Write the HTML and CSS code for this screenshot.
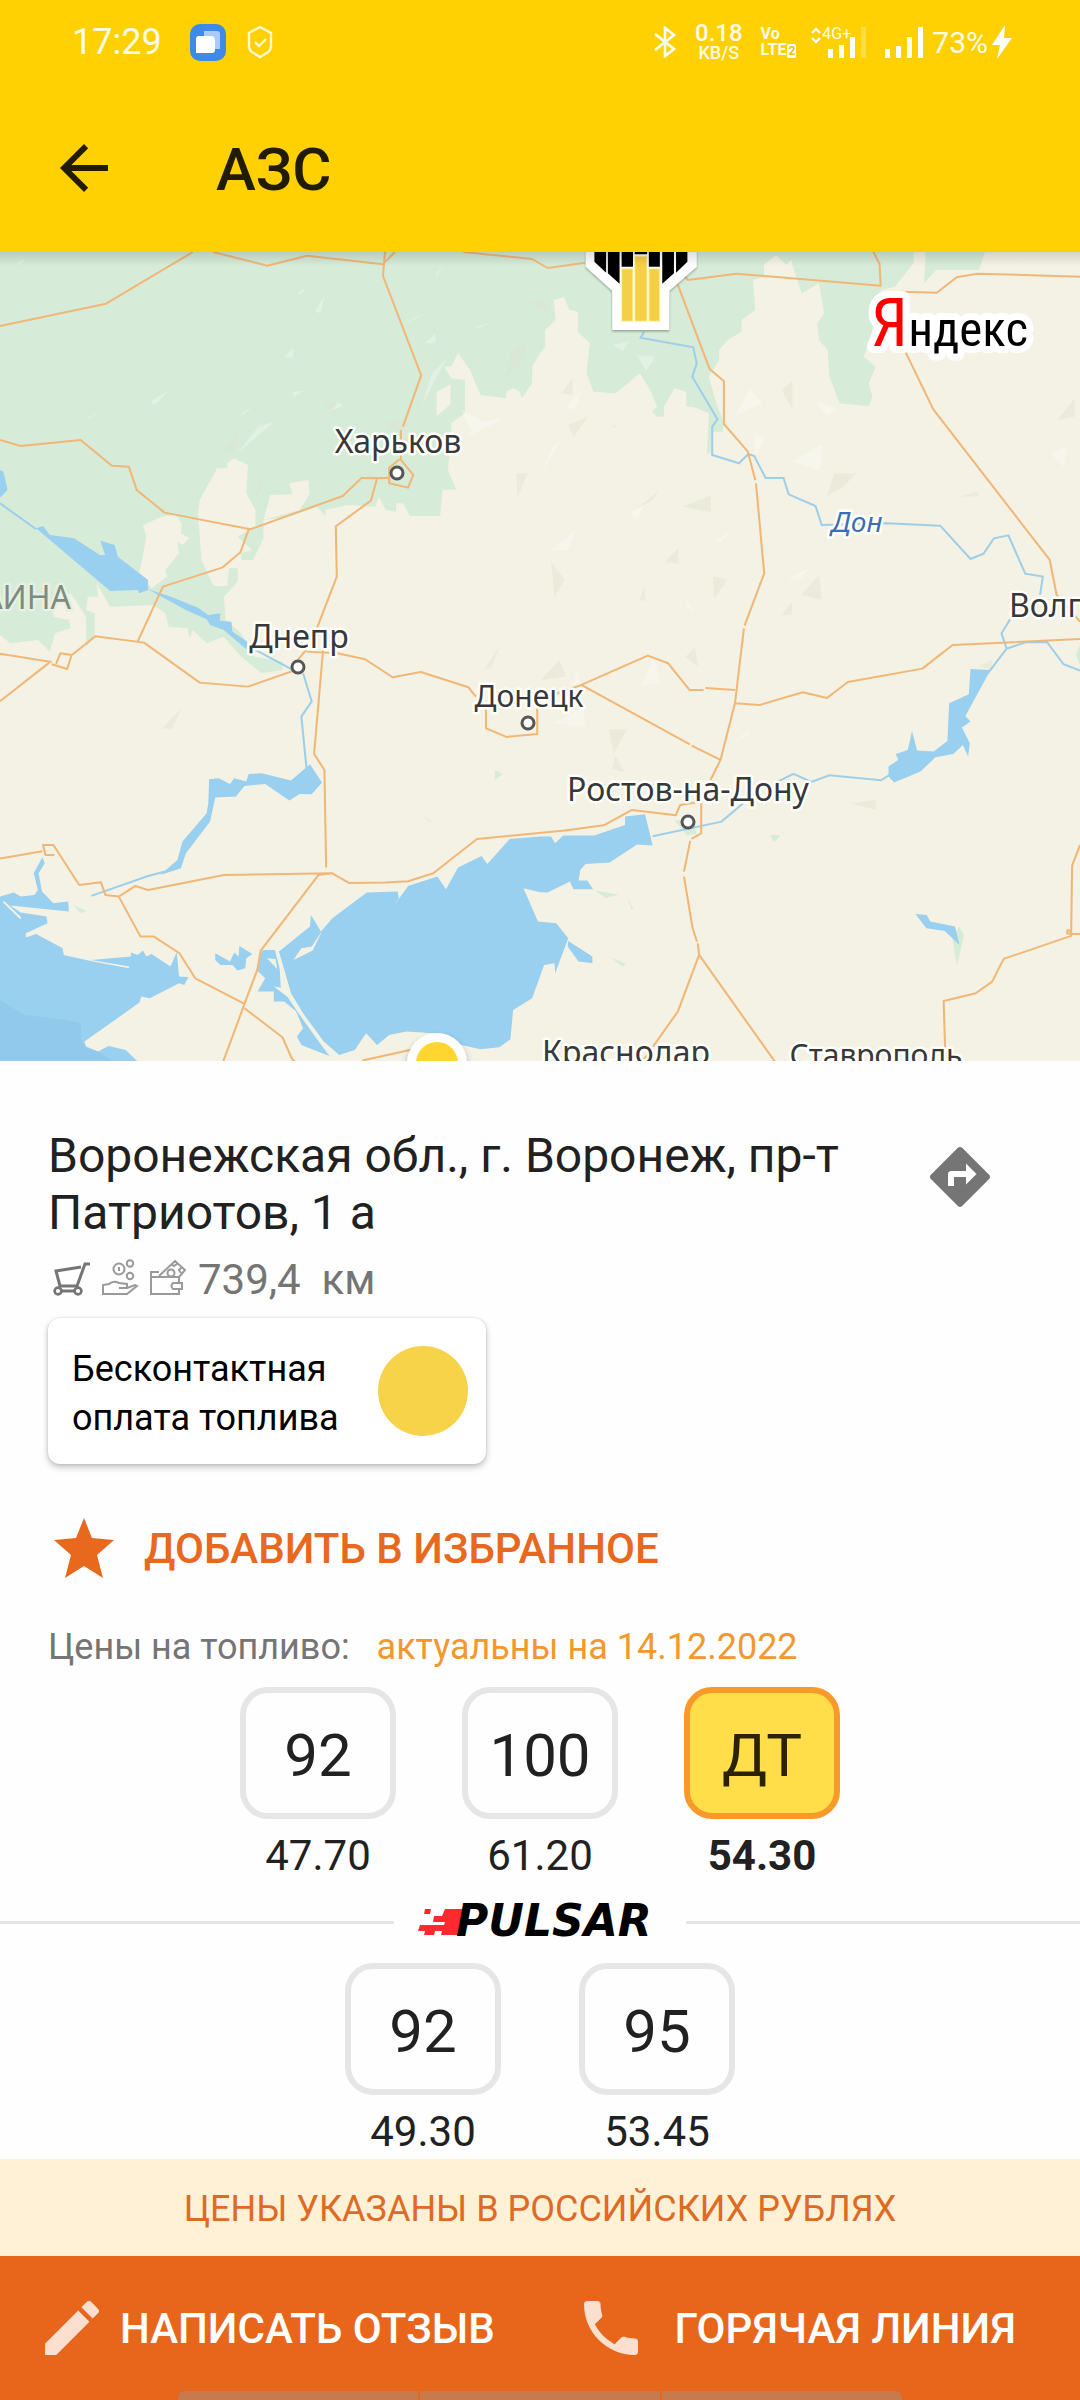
FILE: index.html
```html
<!DOCTYPE html>
<html lang="ru">
<head>
<meta charset="utf-8">
<meta name="viewport" content="width=device-width, initial-scale=1">
<title>АЗС</title>
<link rel="stylesheet" href="styles.css">
</head>
<body>
<header class="top">
  <div class="status">
    <time class="clock">17:29</time>
    <svg class="status-app" viewBox="0 0 36 37"><rect width="36" height="37" rx="10" fill="#3e8ae8"/><path d="M15 7h12q3 0 3 3v15H14V7z" fill="#abc9fb"/><path d="M9 12h12q4 0 4 4v10q0 3-3 3H6V15q0-3 3-3z" fill="#fff"/></svg>
    <svg class="status-shield" viewBox="0 0 28 34"><path d="M14 2l11 6v13q0 4-3 6l-8 5-8-5q-3-2-3-6V8z M9 17l4 4 7-7" fill="none" stroke="#fff8d0" stroke-width="2.4"/></svg>
    <span class="spacer"></span>
    <svg class="bluetooth" viewBox="0 0 24 32"><path d="M2 8l19 15-9 7V2l9 7L2 24" fill="none" stroke="#fff" stroke-width="2.6"/></svg>
    <div class="rate"><b>0.18</b><span>KB/S</span></div>
    <div class="volte"><b>Vo</b><b>LTE<i>2</i></b></div>
    <div class="cell">
      <svg viewBox="0 0 58 34"><path d="M2 8l4-4 4 4M2 13l4 4 4-4" fill="none" stroke="#fff" stroke-width="2.4"/><path d="M18 24h5v9h-5zM29 20h5v13h-5zM40 12h5v21h-5z" fill="#fff"/><path d="M51 2h5v31h-5z" fill="#fff" opacity=".25"/></svg>
      <span>4G+</span>
    </div>
    <svg class="bars" viewBox="0 0 40 34"><path d="M1 24h5v9H1zM12 21h5v12h-5zM23 12h5v21h-5zM34 2h5v31h-5z" fill="#fff"/></svg>
    <span class="battery">73%</span>
    <svg class="bolt" viewBox="0 0 20 34"><path d="M13 0L0 20h8L5 34 20 13h-8z" fill="#fff"/></svg>
  </div>
  <div class="appbar">
    <button class="back" aria-label="Назад"><svg viewBox="0 0 24 24"><path d="M20 11H7.8l5.6-5.6L12 4l-8 8 8 8 1.4-1.4L7.8 13H20z"/></svg></button>
    <h1>АЗС</h1>
  </div>
</header>

<main>
<svg class="map" viewBox="0 0 1080 809" role="img" aria-label="Карта">
  <defs>
    <filter id="soft" x="-20%" y="-20%" width="140%" height="150%"><feDropShadow dx="0" dy="4" stdDeviation="3" flood-opacity=".35"/></filter>
    <linearGradient id="shade" x1="0" y1="0" x2="0" y2="1"><stop offset="0" stop-opacity=".13"/><stop offset="1" stop-opacity="0"/></linearGradient>
  </defs>
  <rect width="1080" height="809" fill="#f4f2e4"/>
  <g transform="matrix(.3444 0 0 .3333 0 -12)">
    <!-- forests -->
    <g fill="#d6ebd8">
      <path d="M0 36H2653V70L2598 140 2558 150 2528 290 2508 350 2543 380 2523 430 2533 470 2523 498 2438 490 2408 410 2403 330 2378 300 2373 250 2393 220 2378 130 2328 160 2308 100 2298 60 2283 75 2253 45 2218 75V110L2186 120 2193 210 2153 240V275L2113 300 2088 330V360L2058 410 2083 500 2103 550 2098 575H2068L2063 640H2053L2058 520 2013 500H1993V455L1958 445 1928 500V530H1908L1893 515 1908 500 1888 450 1858 400 1788 460 1723 455 1703 400 1713 310 1678 275V215L1653 210 1638 170 1608 180 1613 240 1583 270V320L1568 340 1545 380V430L1515 475 1510 455 1490 445 1470 455V475L1395 465 1365 390 1330 340 1310 380H1290L1310 415 1350 420V520L1310 550V600L1300 690 1325 748 1285 750 1278 828H1190L1170 790H1150V815L1120 810 1100 770 1090 800 1010 795 945 810V828L920 800 840 830 765 840V895L735 960H700V940L732 930 690 890 742 860V810L715 760 720 675 680 655 660 670V685H630L615 715 580 780 575 820 585 960 620 1038H660L665 985H690V1025L650 1070 655 1140 700 1180 740 1250 820 1265V1290L760 1300 700 1250 650 1190 600 1210 560 1170 550 1195 545 1165 490 1160 480 1120 445 1095 320 1100 280 1030 285 1070H255L250 1110 275 1120V1190L250 1220V1130L205 1060 155 1075V1130L200 1140 205 1165 160 1180 145 1235 110 1200 30 1210 0 1185z"/>
      <path d="M2688 36L2683 130 2718 90H2843L2860 36zM3136 1215l-12 30 12 30z"/>
      <path d="M1437 1590l22 12-22 18zM212 1995l40 18-18 6zM1959 1742l54 0 10 40-28 4zM2236 1785h30l-18 22zM1728 1952l68 12-38 10zM1822 1974l18 36-6-2zM1772 2152l46 20-10 8zM2785 2060l14 26-20 90-6-30-8-55z"/>
    </g>
    <path fill="#f4f2e4" d="M415 855L470 830 510 825 528 850 525 880 550 895 530 915 515 905 520 940 480 990 485 1010 440 1045 405 1000 425 890zM785 765L850 763 840 730 895 720 900 760 870 810 765 840zM1268 455l40-22v60l-40 36z"/>
    <!-- relief facets -->
    <g fill="#fff" opacity=".32">
      <path d="M40 78l34-25-8 14zM585 135l5-30zM860 165l30-27-12 22zM915 215l27-50-10 55zM825 350l26-26v30zM437 485l57-38-44 48zM245 540l48-28-26 20zM690 640l60-80 46-15zM850 455l32-2-30 18zM700 520l38-26-36 34zM956 512l25-25 16 12zM1225 495l30-95 40-42zM1235 310l30-30v30zM1182 250l50-27-36 14zM1382 260l48-13-44 20zM1265 108l25-44-20 44zM1095 460l55-40zM1358 590l108-56-80 16zM1340 510l26 60 40-24zM640 845l38-36zM1490 920l34-22zM1436 1034l62-32zM1776 1135l50-28zM1570 700l40-90 15 0zM1645 500l45-50-20 60zM1778 315l50-12-20 30zM1850 345l52 5-26 44zM2130 530l50-84 34 42zM2300 665l90-52-10 80zM2190 575l32 22-28 50zM2370 485l60 20-30 22zM2720 560l36-38zM3050 640l48-20-10 60zM1600 930l70-60-20 60zM1830 820l44-30-24 50zM1985 1060l30 60-20-20zM2070 900l58-25-36 30zM2290 1015l60-30-32 40zM1610 1450l90 10-6-60zM1645 1410l30-120 15 80zM2140 1500l34-34v20zM1860 1340l40-92 14 80zM2450 1560l48-24zM2360 2060l20-12zM2710 2370l42-55zM300 2210l58-46-20 30zM635 1575l48-42zM220 1395l44-30zM1410 1300l50-80zM3050 1650l40-18z"/>
    </g>
    <g fill="#dfe0d0" opacity=".4">
      <path d="M1470 405l20-80 40-20-20 70zM940 480l40 12-14 20zM650 640l40-60-10 50zM1128 545h65l-20 28-45-3zM742 780l18-80v40zM1500 700h32l-30 76zM1540 190l34-14 20 40zM1630 460l32-46v52zM1775 560l18-8-10 12zM1650 555l60-28-44 64zM1845 810l70-60-20 30zM2270 450l30-28v84zM2400 770l22-70h66l-40 40zM1980 800l84-34v50zM1600 965l40 55-30 50zM1855 1080l16-38 4 40zM2325 1065l54-60 6 75zM1930 965l40-40v46zM2070 1010l42 8-38 60zM2270 1125l30-42v40zM1990 1250l28-30 8 60zM1768 1468h52l-38 75zM1786 1546l28 50-36-8zM1570 1320l54-60 20 50zM3070 540l50-65v55zM470 1465l56-60-26 62zM1405 1290l46-72-24 64zM2470 1690l74-10v30zM2840 1280l40-20v30zM2780 770l60-15v14zM1218 720l60-22zM1225 1720l34 30-16-6z"/>
    </g>
    <!-- water -->
    <g fill="#99cfef">
      <path d="M0 690L10 695 22 750 0 773zM105 865L125 858 145 885 215 895 290 945H305L292 902 333 915 342 950 430 1020V1050L405 1060 400 1050 320 1053zM430 1048L500 1072 575 1103 605 1125 640 1120 638 1142 672 1145 675 1175 718 1205 715 1228 650 1170 610 1155 600 1138 540 1110z"/>
      <g transform="translate(0 1200)">
        <path d="M607 418L635 415 668 432 680 415 715 425 722 402 760 400 845 422 900 373 935 428 905 463 870 462 840 482 770 432 710 438 685 470 625 473 610 545 540 640 525 685 465 705 515 660 530 605 600 520 605 490z"/>
        <path d="M625 940L668 965 680 938 693 950 695 918 733 942 715 955 712 985 690 992 675 975 640 975 625 960z"/>
        <path d="M0 770L40 758 60 770 100 765 110 750 98 700 123 652 130 670 112 700 122 755 155 790 198 785 200 815 30 797 60 818 135 830 138 850 75 880V893L105 882 182 925 185 945 270 965 375 985V980L265 960 380 950V938L400 945 415 932 425 950 440 942 495 980 513 937 520 1010 547 1012 535 1035 520 1030 435 1075 410 1070 405 1088 245 1205 250 1220 285 1235 315 1218 365 1230 400 1265H0z"/>
        <path d="M810 935L900 860 903 825 932 875 965 835 1065 758 1155 755 1158 775 1138 805 1185 738 1270 710 1295 748 1330 683 1398 648 1415 672 1480 597 1568 590H1600L1612 610 1635 587H1725L1815 555V530L1873 523 1895 617 1850 614 1770 668 1700 672 1685 690 1680 722H1705L1722 748H1665L1655 725 1590 758 1568 757 1520 745 1562 845 1615 850 1650 895 1612 1000 1610 970 1580 975 1568 1010 1545 1075 1490 1110 1482 1198 1450 1222 1395 1228 1340 1215 1260 1180 1180 1175 1130 1185 1095 1215 1063 1180 1030 1230 985 1245 940 1205 880 1120 845 1060z"/>
        <path d="M1650 903L1720 950V970L1680 965 1648 920zM765 930H798L812 985 815 1040 860 1110 960 1250 875 1215 862 1190 880 1165 860 1115 825 1085H795L795 1055H748L770 1015 745 990 760 935z"/>
        <path transform="translate(1568)" d="M1250 87L1308 90 1235 228 1250 245 1225 263 1248 310 1243 350 1228 315 1200 342 1148 352 1105 395 1028 428 1012 410V380L1040 360 1033 342 1068 330 1080 273 1095 332 1143 335 1183 303 1188 190 1245 163zM1090 822L1123 825 1133 845 1205 860 1218 915 1175 873 1122 865z"/>
      </g>
    </g>
    <g transform="translate(0 1200)">
      <path fill="#90c9ec" d="M0 1080L70 1125 190 1140 235 1150V1200L250 1225 285 1235 330 1265H0z"/>
      <path fill="#f4f2e4" d="M852 960L875 925 905 920 936 872 908 932zM775 955l25 2 5 30zM795 1040l35 5 10 30z"/>
      <path d="M805 935Q825 1040 850 1085T960 1248M10 785l50 50" fill="none" stroke="#f0f2e6" stroke-width="6"/>
    </g>
    <!-- rivers -->
    <g fill="none" stroke="#9fcfe8" stroke-width="6">
      <path d="M0 790L105 868M715 1215L850 1290M880 1300L905 1384 875 1430 890 1585M265 1968L430 1908 515 1885"/>
      <path transform="translate(1568)" d="M302 275L292 293 445 322 455 370 442 410 515 538 500 560V645L578 670 605 642 622 648 655 714H707L722 763 800 798 818 855 1005 850 1162 857 1250 957 1288 941 1318 895 1360 886 1409 1001 1460 1010 1452 1065M1365 1138L1340 1180 1355 1226 1410 1207 1472 1206 1520 1273 1568 1292M1355 1226L1300 1300M327 1789L527 1745 590 1690M680 1630L736 1602 788 1626 840 1606 990 1621 1015 1605"/>
    </g>
    <!-- roads -->
    <g fill="none" stroke="#f1b777" stroke-width="6" stroke-linejoin="round">
      <path d="M0 258L308 191 560 36M618 36L776 77 892 47 1112 73M1118 36L1112 108 1223 406 1170 560M1147 36L1114 70M1164 570V660L1200 705 1185 743 1130 730V683L1160 658M1130 714H1050L995 768 727 868 478 818 397 750 374 680 325 677 234 600 60 618 0 600M1095 714L1077 782 975 859 978 1010 920 1165M722 868L698 937 645 983 473 1040 400 1204M0 1241L150 1266M1345 36L1545 57 1590 84 1700 68"/>
      <path transform="translate(0 1200)" d="M0 184L143 68M150 73L195 87 208 45 175 40 163 72M205 48L277-11 418 8 580 128 720 140 865 88M865 60L890 28M890 35L980 40 1060 58 1140 112 1222 96 1360 142 1382 170M938 30L912 342 942 390 947 683M0 656L123 634M158 645H132L125 615H155L230 735 293 727 306 765 345 770 393 738 430 750 650 705 965 700 1013 729 1120 728 1185 724 1258 700 1385 597 1640 572 1753 556 1835 510 1962 526 1975 495 2020 488M345 770L408 890H447L521 940 567 1015 710 1092 648 1265M710 1105L820 1192 847 1255 860 1270M710 1092L747 990 757 932 925 705 965 700M1411 205V265L1470 291 1560 282V205M1052 1262L1200 1228"/>
      <path transform="translate(1568)" d="M400 134L492 386 534 424V552L603 634 625 720M627 730L651 1000 594 1157M592 1165L566 1390 524 1560 495 1620M410 100L430 120 570 101 989 137 986 72 968 36M1050 155L1152 158 1210 112 1270 101 1568 110M1062 338L1142 508 1480 960 1500 1065 1568 1145M45 1362L120 1335 313 1247 372 1270 434 1350H475M480 1344L566 1350M120 1335L435 1513M440 1517L524 1560M566 1390L638 1395 763 1357 833 1374 894 1326 1110 1286 1198 1215 1568 1197M468 1690V1780L440 1797M436 1803L418 1895M418 1910L443 2065 456 2105M458 2110L462 2145 400 2315 328 2420M300 2460L315 2440M462 2145L682 2465M1568 1815L1545 1877 1542 2088 1346 2157 1313 2225 1265 2260 1172 2283 1177 2450M1568 2082H1542L1530 2080 1532 2070 1542 2075"/>
    </g>
  </g>
  <!-- places -->
  <g class="town-dot"><circle cx="397" cy="221" r="6"/><circle cx="298" cy="415" r="6"/><circle cx="528" cy="471" r="6"/><circle cx="688" cy="570" r="6"/></g>
  <g class="town">
    <text x="398" y="201" text-anchor="middle">Харьков</text>
    <text x="299" y="396" text-anchor="middle">Днепр</text>
    <text class="town-small" x="529" y="455" text-anchor="middle">Донецк</text>
    <text x="688" y="549" text-anchor="middle">Ростов-на-Дону</text>
    <text x="1009" y="365">Волг</text>
    <text x="626" y="812" text-anchor="middle">Краснодар</text>
    <text class="town-small" x="876" y="814" text-anchor="middle">Ставрополь</text>
  </g>
  <text class="country" x="71" y="357" text-anchor="end">УКРАИНА</text>
  <text class="river" x="857" y="280" text-anchor="middle">Дон</text>
  <!-- station pin -->
  <g transform="matrix(.3444 0 0 .3333 540 -12)" filter="url(#soft)">
    <path fill="#fff" d="M133 0V80L210 152V270H375V152L455 80V0z"/>
    <path d="M158 20H192V98L158 65zM197 20H231V131L197 100zM237 20H270V80H237zM275 20H311V43H275zM316 20H348V80H316zM355 20H389V100L355 131zM395 20H428V65L395 98z"/>
    <path fill="#f5cf45" stroke="#fdf5b5" stroke-width="3" d="M237 86H270V244H237zM275 48H311V244H275zM316 86H348V244H316z"/>
  </g>
  <circle cx="437" cy="811" r="30" fill="#fff" filter="url(#soft)"/><circle cx="437" cy="811" r="21" fill="#ffd52e"/>
  <text class="yandex" x="871" y="94"><tspan class="ya">Я</tspan>ндекс</text>
  <rect width="1080" height="14" fill="url(#shade)"/>
</svg>

<section class="station">
  <div class="address">
    <h2>Воронежская обл., г. Воронеж, пр-т Патриотов, 1 а</h2>
    <button class="route" aria-label="Маршрут"><svg viewBox="0 0 24 24"><path d="M21.71 11.29l-9-9c-.39-.39-1.02-.39-1.41 0l-9 9c-.39.39-.39 1.02 0 1.41l9 9c.39.39 1.02.39 1.41 0l9-9c.39-.38.39-1.01 0-1.41zM14 14.5V12h-4v3H8v-4c0-.55.45-1 1-1h5V7.5l3.5 3.5-3.5 3.5z"/></svg></button>
  </div>
  <div class="distance">
    <svg viewBox="0 0 36 40" class="cart"><path d="M36 4h-5l-8 22H6L2 11l25-4M6 31h16" stroke-width="3"/><circle cx="4" cy="31" r="3.4" stroke-width="2.6"/><circle cx="24" cy="31" r="3.4" stroke-width="2.6"/></svg>
    <svg viewBox="0 0 36 40" class="thin"><circle cx="17" cy="9" r="5.5"/><path d="M17 7v4"/><circle cx="28" cy="3.5" r="3.2"/><circle cx="28" cy="16" r="3.2"/><path d="M1 34V25l6-1q4-4 10-1l8 1v4h-8 8l8-3 2 1-10 8z"/></svg>
    <svg viewBox="0 0 36 40" class="thin"><path d="M1 17v17h28v-5M1 17h28v6M1 17v-5h8M9 16L25 1l10 9-6 7M21 4l3 2 3-2M31 13l-2-3 3-3"/><circle cx="21" cy="13" r="3.5"/><path d="M23 23h9v6h-9q-3-3 0-6z"/></svg>
    <span>739,4&nbsp; км</span>
  </div>
  <button class="pay"><span>Бесконтактная<br>оплата топлива</span><i class="coin"></i></button>
  <button class="favourite"><svg viewBox="0 0 60 60"><path d="M30 0l8 20 22 2-17 15 6 23-19-12-19 12 6-23L0 22l22-2z"/></svg>ДОБАВИТЬ В ИЗБРАННОЕ</button>
  <p class="actual">Цены на топливо: <span>актуальны на 14.12.2022</span></p>
</section>

<section class="fuels">
  <div class="fuel"><button>92</button><span>47.70</span></div>
  <div class="fuel"><button>100</button><span>61.20</span></div>
  <div class="fuel chosen"><button aria-pressed="true">ДТ</button><span>54.30</span></div>
</section>
<div class="brand">
  <svg viewBox="0 0 244 30" role="img" aria-label="Pulsar"><path fill="#ff2a30" d="M27 2H50L43 28H23l1-4h-7l-1 4H6l1-4H0l2-6h24l1-3H15l1-6h8zM7 2h6l-1 5H6z"/><text x="38" y="29">PULSAR</text></svg>
</div>
<section class="fuels branded">
  <div class="fuel"><button>92</button><span>49.30</span></div>
  <div class="fuel"><button>95</button><span>53.45</span></div>
</section>
<p class="currency">ЦЕНЫ УКАЗАНЫ В РОССИЙСКИХ РУБЛЯХ</p>
</main>

<footer class="actions">
  <button class="review"><svg viewBox="0 0 24 24"><path d="M3 17.25V21h3.75L17.81 9.94l-3.75-3.75zM20.71 7.04c.39-.39.39-1.02 0-1.41l-2.34-2.34c-.39-.39-1.02-.39-1.41 0l-1.83 1.83 3.75 3.75z"/></svg>НАПИСАТЬ ОТЗЫВ</button>
  <button class="hotline"><svg viewBox="0 0 24 24"><path d="M6.62 10.79c1.44 2.83 3.76 5.14 6.59 6.59l2.2-2.2c.27-.27.67-.36 1.02-.24 1.12.37 2.33.57 3.57.57.55 0 1 .45 1 1V20c0 .55-.45 1-1 1-9.39 0-17-7.61-17-17 0-.55.45-1 1-1h3.5c.55 0 1 .45 1 1 0 1.25.2 2.45.57 3.57.11.35.03.74-.25 1.02z"/></svg>ГОРЯЧАЯ ЛИНИЯ</button>
  <div class="handle"><i></i><i></i><i></i></div>
</footer>
</body>
</html>
```
FILE: styles.css
```css
* { box-sizing: border-box; }
body { margin: 0; font-family: Roboto, "Noto Sans", sans-serif; color: #212121; background: #fefefe; }
button { margin: 0; padding: 0; border: 0; background: none; font: inherit; color: inherit; text-align: left; }
h1, h2, p { margin: 0; font-weight: 400; }
svg { display: block; flex: none; }

.top { background: #ffd103; }
.status { display: flex; align-items: center; height: 84px; padding: 0 68px 0 72px; color: #fffbe6; }
.clock { font-size: 36px; }
.status-app { width: 36px; height: 37px; margin-left: 28px; }
.status-shield { width: 28px; height: 34px; margin-left: 20px; }
.spacer { flex: 1; }
.bluetooth { width: 24px; height: 32px; }
.rate { display: flex; flex-direction: column; align-items: center; margin-left: 18px; font-size: 18px; line-height: 18px; font-weight: 500; }
.rate b { font-size: 24px; line-height: 22px; font-weight: 500; }
.volte { display: flex; flex-direction: column; margin-left: 18px; font-size: 16px; line-height: 16px; }
.volte i { margin-left: 1px; padding: 0 1px; border-radius: 2px; background: #fff; color: #eec200; font-size: 12px; font-style: normal; }
.cell { position: relative; width: 58px; margin-left: 14px; }
.cell svg { width: 58px; height: 34px; }
.cell span { position: absolute; left: 12px; top: 0; font-size: 16px; line-height: 18px; }
.bars { width: 40px; height: 34px; margin-left: 16px; }
.battery { margin: 0 4px 0 8px; font-size: 30px; }
.bolt { width: 20px; height: 34px; }
.appbar { display: flex; align-items: center; height: 168px; padding: 0 48px; color: #211c00; }
.back svg { width: 72px; height: 72px; fill: #211c00; }
.appbar h1 { margin-left: 96px; padding-top: 2px; font-size: 60px; font-weight: 500; }

.map { width: 100%; height: auto; }
.town-dot { fill: #fff; stroke: #555; stroke-width: 3px; }
.town, .country, .river { font-family: "Noto Sans", sans-serif; font-size: 32px; fill: #37383c; stroke: #fffffa; stroke-width: 5px; stroke-linejoin: round; paint-order: stroke; }
.town-small { font-size: 30px; }
.country { fill: #7e8c80; stroke: #e6f0e4; }
.river { font-size: 28px; font-style: italic; fill: #3d6cb4; }
.yandex { font-family: "Liberation Sans Narrow", "Roboto Condensed", Roboto, sans-serif; font-size: 49px; stroke: #fff; stroke-width: 14px; stroke-linejoin: round; paint-order: stroke; }
.ya { font-size: 66px; fill: #f00; }

.station { display: flex; flex-direction: column; align-items: flex-start; padding: 66px 84px 0 48px; }
.address { display: flex; width: 100%; justify-content: space-between; align-items: flex-start; }
.address h2 { max-width: 820px; font-size: 48px; line-height: 57px; }
.route { padding-top: 14px; }
.route svg { width: 72px; height: 72px; fill: #757575; }
.distance { display: flex; align-items: center; gap: 12px; height: 56px; margin: 11px 0 10px; padding-left: 6px; font-size: 42px; line-height: 56px; color: #757575; }
.distance svg { width: 36px; height: 40px; overflow: visible; fill: none; stroke: #757575; }
.distance .thin { stroke: #9a9a9a; stroke-width: 2px; }
.pay { display: flex; align-items: center; gap: 39px; height: 146px; padding: 0 18px 0 24px; border-radius: 12px; background: #fff; box-shadow: 0 3px 6px rgba(0,0,0,.25), 0 0 2px rgba(0,0,0,.15); color: #000; font-size: 36px; line-height: 49px; }
.pay span { padding-top: 5px; }
.coin { width: 90px; height: 90px; border-radius: 50%; background: #f6d349; }
.favourite { display: flex; align-items: center; gap: 30px; height: 84px; margin-top: 42px; padding-left: 6px; color: #e8681e; font-size: 42px; font-weight: 500; }
.favourite svg { width: 60px; height: 60px; fill: #e8681e; }
.actual { margin-top: 33px; font-size: 36px; line-height: 48px; color: #757575; }
.actual span { margin-left: 18px; color: #f2982f; }

.fuels { display: flex; justify-content: center; gap: 66px; margin-top: 16px; }
.fuel { display: flex; flex-direction: column; align-items: center; gap: 13px; font-size: 42px; line-height: 48px; }
.fuel button { width: 156px; height: 132px; padding-top: 5px; border: 6px solid #e6e6e6; border-radius: 28px; font-size: 60px; text-align: center; }
.chosen { font-weight: 700; }
.chosen button { border-color: #f79a2a; background: #ffde4a; color: #2a2200; font-weight: 400; }
.brand { display: flex; align-items: center; gap: 24px; height: 60px; margin-top: 12px; }
.brand::before, .brand::after { content: ""; flex: 1; height: 3px; background: #e4e4e4; }
.brand svg { width: 244px; height: 30px; overflow: visible; }
.brand text { font: italic 700 44px "DejaVu Sans", sans-serif; fill: #000; }
.branded { gap: 78px; margin-top: 11px; }
.currency { margin-top: 3px; padding-top: 4px; background: #fff1d6; color: #de6b25; font-size: 36px; line-height: 93px; text-align: center; }

.actions { position: relative; display: flex; justify-content: space-between; height: 144px; padding: 0 64px 0 36px; background: #e8661b; color: #fff; }
.actions button { display: flex; align-items: center; gap: 12px; font-size: 42px; font-weight: 500; }
.actions .hotline { gap: 28px; }
.actions svg { width: 72px; height: 72px; fill: #fbdfcf; }
.handle { position: absolute; left: 178px; right: 178px; bottom: 0; display: flex; gap: 2px; height: 9px; overflow: hidden; border-radius: 6px 6px 0 0; }
.handle i { flex: 1; background: #c77a4c; }
```
